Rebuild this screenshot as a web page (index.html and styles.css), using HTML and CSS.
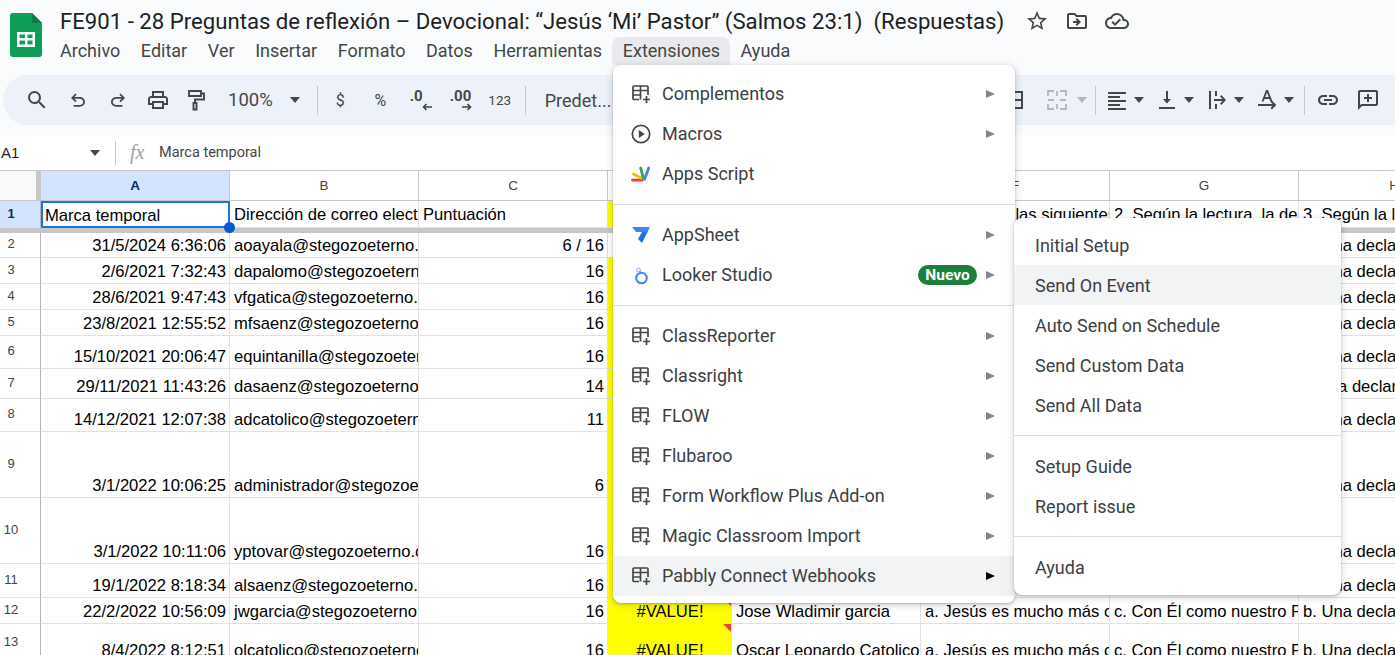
FILE: index.html
```html
<!DOCTYPE html>
<html lang="es">
<head>
  <meta charset="UTF-8" />
  <title>FE901 - 28 Preguntas de reflexión (Respuestas)</title>
  <link rel="stylesheet" href="styles.css">
</head>
<body>
  <svg class="defs" width="0" height="0">
    <symbol id="addon" viewBox="0 0 20 20">
      <path d="M8 15.500H3a1 1 0 0 1-1-1V3a1 1 0 0 1 1-1h13a1 1 0 0 1 1 1v8M2 6.500h15M9.500 2v13.500M2 11h7.500M15.500 12v7M12 15.500h7" fill="none" stroke="#444746" stroke-width="1.700"/>
    </symbol>
  </svg>

  <header class="top">
    <svg class="logo" viewBox="0 0 32 44">
      <path d="M3 0h19l10 10v31a3 3 0 0 1-3 3H3a3 3 0 0 1-3-3V3a3 3 0 0 1 3-3z" fill="#0f9d58"/>
      <path d="M22 0l10 10H22z" fill="#0b7a43"/>
      <path d="M7 19h18v15H7zm2.500 2.500v3.500h5.500v-3.500zm8 0v3.500h5v-3.500zm-8 6v4h5.500v-4zm8 0v4h5v-4z" fill="#fff" fill-rule="evenodd"/>
    </svg>
    <div class="top-main">
      <div class="title-row">
        <h1 class="doc-title">FE901 - 28 Preguntas de reflexión – Devocional: “Jesús ‘Mi’ Pastor” (Salmos 23:1)&nbsp; (Respuestas)</h1>
        <svg class="ico" viewBox="0 0 24 24"><path d="M22 9.240l-7.190-.62L12 2 9.190 8.630 2 9.240l5.460 4.730L5.820 21 12 17.270 18.180 21l-1.630-7.030L22 9.240zM12 15.400l-3.760 2.270 1-4.280-3.320-2.880 4.380-.38L12 6.100l1.710 4.040 4.380.38-3.320 2.880 1 4.280L12 15.400z"/></svg>
        <svg class="ico" viewBox="0 0 24 24"><path d="M20 6h-8l-2-2H4c-1.100 0-2 .9-2 2v12c0 1.100.9 2 2 2h16c1.100 0 2-.9 2-2V8c0-1.100-.9-2-2-2zm0 12H4V6h5.170l2 2H20v10z"/><path d="M12.160 12H8v2h4.160l-1.590 1.590L12 17l4-4-4-4-1.410 1.410z"/></svg>
        <svg class="ico" viewBox="0 0 24 24"><path d="M19.350 10.040A7.490 7.490 0 0 0 12 4C9.110 4 6.600 5.640 5.350 8.040A5.994 5.994 0 0 0 0 14c0 3.310 2.690 6 6 6h13c2.760 0 5-2.240 5-5 0-2.640-2.050-4.780-4.650-4.960zM19 18H6c-2.210 0-4-1.790-4-4 0-2.050 1.530-3.760 3.560-3.970l1.070-.11.5-.95A5.469 5.469 0 0 1 12 6c2.620 0 4.880 1.860 5.390 4.430l.3 1.500 1.530.11A2.980 2.980 0 0 1 22 15c0 1.650-1.350 3-3 3zm-9-3.820l-2.090-2.090L6.500 13.500 10 17l6.010-6.010-1.410-1.410z"/></svg>
      </div>
      <nav class="menubar">
        <span>Archivo</span><span>Editar</span><span>Ver</span><span>Insertar</span><span>Formato</span><span>Datos</span><span>Herramientas</span><span class="open">Extensiones</span><span>Ayuda</span>
      </nav>
    </div>
  </header>

  <div class="toolbar-wrap">
    <div class="toolbar">
      <svg class="tb w42" viewBox="0 0 24 24"><path d="M15.500 14h-.79l-.28-.27A6.470 6.470 0 0 0 16 9.500 6.500 6.500 0 1 0 9.500 16c1.610 0 3.090-.59 4.230-1.570l.27.28v.79l5 4.990L20.490 19l-4.990-5zm-6 0C7.010 14 5 11.990 5 9.500S7.010 5 9.500 5 14 7.010 14 9.500 11.990 14 9.500 14z"/></svg>
      <svg class="tb w40 small" viewBox="0 0 24 24"><path d="M7 19v-2h7.100c1.050 0 1.960-.33 2.730-1 .78-.67 1.170-1.500 1.170-2.500s-.39-1.830-1.170-2.500C16.060 10.330 15.150 10 14.100 10H7.800l2.600 2.600L9 14 4 9l5-5 1.400 1.400L7.800 8h6.300c1.620 0 3 .53 4.150 1.580C19.420 10.630 20 11.930 20 13.500s-.58 2.870-1.750 3.920C17.100 18.470 15.720 19 14.100 19H7z"/></svg>
      <svg class="tb w40 small flip" viewBox="0 0 24 24"><path d="M7 19v-2h7.100c1.050 0 1.960-.33 2.730-1 .78-.67 1.170-1.500 1.170-2.500s-.39-1.830-1.170-2.500C16.060 10.330 15.150 10 14.100 10H7.800l2.600 2.600L9 14 4 9l5-5 1.400 1.400L7.800 8h6.300c1.620 0 3 .53 4.150 1.580C19.420 10.630 20 11.930 20 13.500s-.58 2.870-1.750 3.920C17.100 18.470 15.720 19 14.100 19H7z"/></svg>
      <svg class="tb w40" viewBox="0 0 24 24"><path d="M19 8h-1V3H6v5H5c-1.660 0-3 1.340-3 3v6h4v4h12v-4h4v-6c0-1.660-1.340-3-3-3zM8 5h8v3H8V5zm8 14H8v-4h8v4zm4-4h-2v-2H6v2H4v-4c0-.55.45-1 1-1h14c.55 0 1 .45 1 1v4z"/></svg>
      <svg class="tb w36" viewBox="0 0 24 24"><path d="M5 3h12v5H5zM17 5.500h3v6h-9V15M9.500 15h3v6.500h-3z" fill="none" stroke="#444746" stroke-width="1.900"/></svg>
      <span class="tb-text zoom">100%</span>
      <i class="caret zoom-caret"></i>
      <i class="tb-sep"></i>
      <span class="tb-text money">$</span>
      <span class="tb-text pct">%</span>
      <span class="tb-text dec first">.0<svg viewBox="0 0 12 8"><path d="M11 4H3M5.500 1L2.500 4l3 3" fill="none" stroke="#444746" stroke-width="1.600"/></svg></span>
      <span class="tb-text dec">.00<svg viewBox="0 0 12 8"><path d="M1 4h8M6.500 1l3 3-3 3" fill="none" stroke="#444746" stroke-width="1.600"/></svg></span>
      <span class="tb-text num">123</span>
      <i class="tb-sep"></i>
      <span class="tb-text font">Predet...</span>

      <div class="tb-right">
        <svg class="tb w36 borders" viewBox="0 0 24 24"><path d="M3 4h18v16H3zM12 4v16M3 12h18" fill="none" stroke="#444746" stroke-width="2"/></svg>
        <svg class="tb w26 off" viewBox="0 0 24 24"><path d="M9 3H3v5M15 3h6v5M9 21H3v-5M15 21h6v-5M12 3v5M12 16v5M3 12h6M15 12h6" fill="none" stroke="#b4b6b9" stroke-width="1.800"/></svg>
        <i class="caret off-caret"></i>
        <i class="tb-sep"></i>
        <svg class="tb w26" viewBox="0 0 24 24"><path d="M3 4h18v2H3zM3 8h12v2H3zM3 12h18v2H3zM3 16h12v2H3zM3 20h18v2H3z"/></svg>
        <i class="caret"></i>
        <svg class="tb w26" viewBox="0 0 24 24"><path d="M4 19h16v2H4zM16 11h-3V3h-2v8H8l4 4.500z"/></svg>
        <i class="caret"></i>
        <svg class="tb w26" viewBox="0 0 24 24"><path d="M4 3h2v18H4zM10 3h2v5h-2zM10 16h2v5h-2zM9 11h8.500l-2.500-2.500L16.400 7 21 12l-4.600 5-1.400-1.500 2.500-2.500H9z"/></svg>
        <i class="caret"></i>
        <svg class="tb w26" viewBox="0 0 24 24"><path d="M11 2h2l4.500 11.500h-2L14.400 11H9.600l-1 2.500h-2zM10.300 9h3.400L12 4.500zM3 16h14.500l-2-2 1.400-1.400L21.300 17l-4.400 4.400-1.400-1.400 2-2H3z"/></svg>
        <i class="caret"></i>
        <i class="tb-sep"></i>
        <svg class="tb w44" viewBox="0 0 24 24"><path d="M17 7h-4v2h4c1.650 0 3 1.350 3 3s-1.350 3-3 3h-4v2h4c2.760 0 5-2.240 5-5s-2.240-5-5-5zm-6 8H7c-1.650 0-3-1.350-3-3s1.350-3 3-3h4V7H7c-2.760 0-5 2.240-5 5s2.240 5 5 5h4v-2zm-3-4h8v2H8z"/></svg>
        <svg class="tb w36" viewBox="0 0 24 24"><path d="M20 2H4c-1.100 0-2 .9-2 2v18l4-4h14c1.100 0 2-.9 2-2V4c0-1.100-.9-2-2-2zm0 14H5.170L4 17.170V4h16v12z"/><path d="M11 6h2v3h3v2h-3v3h-2v-3H8V9h3z"/></svg>
      </div>
    </div>
  </div>

  <div class="formula-bar">
    <span class="name-box">A1</span>
    <i class="caret"></i>
    <i class="fb-sep"></i>
    <em class="fx">fx</em>
    <span class="fb-text">Marca temporal</span>
  </div>

  <div class="sheet-wrap">
  <table class="sheet">
    <colgroup>
      <col class="c-row"><col class="c-a"><col class="c-b"><col class="c-c"><col class="c-d"><col class="c-e"><col class="c-f"><col class="c-g"><col class="c-h">
    </colgroup>
    <tr class="col-heads">
      <th class="corner"></th><th class="sel-head">A</th><th>B</th><th>C</th><th>D</th><th>E</th><th>F</th><th>G</th><th>H</th>
    </tr>
    <tr class="h27 first-row">
      <th class="rn sel-head">1</th>
      <td class="l a1">Marca temporal<i class="handle"></i></td>
      <td class="l">Dirección de correo electrónico</td>
      <td class="l">Puntuación</td>
      <td class="y"></td>
      <td class="l">Nombre y apellido</td>
      <td class="l">1. ¿Cuál de las siguientes afirmaciones</td>
      <td class="l">2. Según la lectura, la descripción</td>
      <td class="l">3. Según la lectura</td>
    </tr>
    <tr class="freeze"><td colspan="9"></td></tr>
    <tr class="h25">
      <th class="rn">2</th><td class="r">31/5/2024 6:36:06</td><td class="l">aoayala@stegozoeterno.com</td><td class="r">6 / 16</td><td></td><td></td><td></td><td></td><td class="l">b. Una declaración</td>
    </tr>
    <tr class="h26">
      <th class="rn">3</th><td class="r">2/6/2021 7:32:43</td><td class="l">dapalomo@stegozoeterno.com</td><td class="r">16</td><td class="y"></td><td></td><td></td><td></td><td class="l">b. Una declaración</td>
    </tr>
    <tr class="h26">
      <th class="rn">4</th><td class="r">28/6/2021 9:47:43</td><td class="l">vfgatica@stegozoeterno.com</td><td class="r">16</td><td class="y"></td><td></td><td></td><td></td><td class="l">b. Una declaración</td>
    </tr>
    <tr class="h26">
      <th class="rn">5</th><td class="r">23/8/2021 12:55:52</td><td class="l">mfsaenz@stegozoeterno.com</td><td class="r">16</td><td class="y"></td><td></td><td></td><td></td><td class="l">b. Una declaración</td>
    </tr>
    <tr class="h33">
      <th class="rn">6</th><td class="r">15/10/2021 20:06:47</td><td class="l">equintanilla@stegozoeterno.com</td><td class="r">16</td><td class="y"></td><td></td><td></td><td></td><td class="l">b. Una declaración</td>
    </tr>
    <tr class="h30">
      <th class="rn">7</th><td class="r">29/11/2021 11:43:26</td><td class="l">dasaenz@stegozoeterno.com</td><td class="r">14</td><td class="y"></td><td></td><td></td><td></td><td class="l">f. Una declaración</td>
    </tr>
    <tr class="h33">
      <th class="rn">8</th><td class="r">14/12/2021 12:07:38</td><td class="l">adcatolico@stegozoeterno.com</td><td class="r">11</td><td class="y"></td><td></td><td></td><td></td><td class="l">b. Una declaración</td>
    </tr>
    <tr class="h66">
      <th class="rn">9</th><td class="r">3/1/2022 10:06:25</td><td class="l">administrador@stegozoeterno.com</td><td class="r">6</td><td class="y"></td><td></td><td></td><td></td><td class="l">b. Una declaración</td>
    </tr>
    <tr class="h66">
      <th class="rn">10</th><td class="r">3/1/2022 10:11:06</td><td class="l">yptovar@stegozoeterno.com</td><td class="r">16</td><td class="y"></td><td></td><td></td><td></td><td class="l">b. Una declaración</td>
    </tr>
    <tr class="h34">
      <th class="rn">11</th><td class="r">19/1/2022 8:18:34</td><td class="l">alsaenz@stegozoeterno.com</td><td class="r">16</td><td class="y"></td><td></td><td></td><td></td><td class="l">b. Una declaración</td>
    </tr>
    <tr class="h26">
      <th class="rn">12</th><td class="r">22/2/2022 10:56:09</td><td class="l">jwgarcia@stegozoeterno.com</td><td class="r">16</td><td class="y c note">#VALUE!</td><td class="l">Jose Wladimir garcia</td><td class="l">a. Jesús es mucho más cercano</td><td class="l">c. Con Él como nuestro Pastor</td><td class="l">b. Una declaración</td>
    </tr>
    <tr class="h39">
      <th class="rn">13</th><td class="r">8/4/2022 8:12:51</td><td class="l">olcatolico@stegozoeterno.com</td><td class="r">16</td><td class="y c note">#VALUE!</td><td class="l">Oscar Leonardo Catolico</td><td class="l">a. Jesús es mucho más cercano</td><td class="l">c. Con Él como nuestro Pastor</td><td class="l">b. Una declaración</td>
    </tr>
  </table>
  </div>

  <div class="menu main-menu">
    <div class="item"><svg class="mi"><use href="#addon"/></svg>Complementos<i class="arrow"></i></div>
    <div class="item">
      <svg class="mi" viewBox="0 0 20 20"><circle cx="10" cy="10" r="8.700" fill="none" stroke="#444746" stroke-width="1.700"/><path d="M7.800 6l6 4-6 4z" fill="#444746"/></svg>
      Macros<i class="arrow"></i>
    </div>
    <div class="item">
      <svg class="mi" viewBox="0 0 20 20" fill="none" stroke-linecap="round">
        <path d="M1.500 16.200h9.500" stroke="#ea4335" stroke-width="2.800"/>
        <path d="M2.500 10l8 4.300" stroke="#fbbc04" stroke-width="2.800"/>
        <path d="M9.700 4l2.600 10.300" stroke="#34a853" stroke-width="2.800"/>
        <path d="M17.700 4l-4.200 11.300" stroke="#4285f4" stroke-width="2.800"/>
      </svg>
      Apps Script
    </div>
    <hr>
    <div class="item">
      <svg class="mi" viewBox="0 0 20 20"><path d="M1 2h18l-4.500 5H5z" fill="#4285f4"/><path d="M14.500 7L19 2l-8 16-4-4 4-7z" fill="#1a73e8"/></svg>
      AppSheet<i class="arrow"></i>
    </div>
    <div class="item">
      <svg class="mi" viewBox="0 0 20 20"><circle cx="10.500" cy="13" r="5.300" fill="none" stroke="#4285f4" stroke-width="2"/><circle cx="7.500" cy="5" r="1.800" fill="none" stroke="#aecbfa" stroke-width="1.400"/><path d="M8.500 6.500l1.500 1.500" stroke="#4285f4" stroke-width="1.600"/></svg>
      Looker Studio<span class="badge">Nuevo</span><i class="arrow near"></i>
    </div>
    <hr>
    <div class="item"><svg class="mi"><use href="#addon"/></svg>ClassReporter<i class="arrow"></i></div>
    <div class="item"><svg class="mi"><use href="#addon"/></svg>Classright<i class="arrow"></i></div>
    <div class="item"><svg class="mi"><use href="#addon"/></svg>FLOW<i class="arrow"></i></div>
    <div class="item"><svg class="mi"><use href="#addon"/></svg>Flubaroo<i class="arrow"></i></div>
    <div class="item"><svg class="mi"><use href="#addon"/></svg>Form Workflow Plus Add-on<i class="arrow"></i></div>
    <div class="item"><svg class="mi"><use href="#addon"/></svg>Magic Classroom Import<i class="arrow"></i></div>
    <div class="item hover"><svg class="mi"><use href="#addon"/></svg>Pabbly Connect Webhooks<i class="arrow"></i></div>
  </div>

  <div class="menu sub-menu">
    <div class="item">Initial Setup</div>
    <div class="item hover">Send On Event</div>
    <div class="item">Auto Send on Schedule</div>
    <div class="item">Send Custom Data</div>
    <div class="item">Send All Data</div>
    <hr>
    <div class="item">Setup Guide</div>
    <div class="item">Report issue</div>
    <hr>
    <div class="item">Ayuda</div>
  </div>
</body>
</html>
```

FILE: styles.css
```css
* { box-sizing: border-box; }
html, body {
  height: 100%;
}
body {
  margin: 0;
  overflow: hidden;
  background: #fff;
  font-family: Roboto, sans-serif;
  color: #1f1f1f;
  position: relative;
}
.defs {
  position: absolute;
}

/* header */
.top {
  display: flex;
  height: 75px;
  background: #f9fbfd;
}
.logo {
  width: 32px;
  height: 44px;
  margin: 13px 18px 0 10px;
  flex: none;
}
.top-main {
  flex: 1;
  min-width: 0;
}
.title-row {
  display: flex;
  align-items: center;
  height: 37px;
  padding-top: 4px;
}
.doc-title {
  margin: 0 21px 0 0;
  font-size: 22.160px;
  font-weight: 400;
  white-space: nowrap;
  color: #1f1f1f;
}
.ico {
  width: 24px;
  height: 24px;
  margin-right: 16px;
  fill: #444746;
}
.menubar {
  display: flex;
  height: 28px;
  align-items: center;
  font-size: 18px;
  color: #444746;
  margin-left: -10.300px;
}
.menubar span {
  padding: 0 10.300px;
  line-height: 28px;
}
.menubar .open {
  background: #e8eaed;
  border-radius: 8px 8px 0 0;
}

/* toolbar */
.toolbar-wrap {
  height: 60px;
  background: #f9fbfd;
  padding: 0 0 9px 3px;
}
.toolbar {
  display: flex;
  align-items: center;
  height: 50px;
  padding-left: 13px;
  background: #edf2fa;
  border-radius: 25px 0 0 25px;
  color: #444746;
}
.tb {
  height: 24px;
  fill: #444746;
  flex: none;
}
.tb.small { height: 21px; }
.w26 { width: 26px; }
.w36 { width: 36px; }
.w40 { width: 40px; }
.w42 { width: 42px; }
.w44 { width: 44px; }
.flip { transform: scaleX(-1); }
.tb-text {
  font-size: 16px;
  flex: none;
}
.zoom {
  font-size: 18.500px;
  margin-left: 14px;
}
.zoom-caret {
  margin: 0 17px 0 17px;
}
.money {
  width: 25px;
  margin-left: 18px;
  text-align: left;
}
.pct {
  width: 37px;
  text-align: center;
  margin-left: 1px;
}
.dec {
  display: flex;
  flex-direction: column;
  align-items: flex-start;
  width: 40px;
  padding-left: 10px;
  font-size: 15px;
  font-weight: 700;
  line-height: 13px;
}
.dec.first {
  margin-left: 1px;
}
.dec svg {
  width: 12px;
  height: 8px;
  margin-left: 11px;
}
.num {
  width: 40px;
  margin-right: 5px;
  text-align: center;
  font-size: 13.500px;
}
.font {
  font-size: 18px;
  margin-left: 19px;
}
.tb-sep {
  width: 1px;
  height: 29px;
  background: #c7c7c7;
  flex: none;
}
.tb-right {
  display: flex;
  align-items: center;
  margin-left: auto;
  padding-right: 9px;
}
.caret {
  width: 0;
  height: 0;
  border: 5px solid transparent;
  border-top: 6px solid #444746;
  border-bottom: 0;
  flex: none;
}
.tb-right .caret {
  margin: 0 10px 0 4px;
}
.tb-right .tb-sep {
  margin-right: 1px;
}
.tb-right .off-caret {
  margin: 0 8px 0 7px;
  border-top-color: #b4b6b9;
}
.tb-right .off-caret + .tb-sep {
  margin-right: 8px;
}
.borders {
  margin-right: 13px;
}

/* formula bar */
.formula-bar {
  display: flex;
  align-items: center;
  height: 36px;
  background: #fff;
  border-bottom: 1px solid #c7c7c7;
  font-size: 14.500px;
  color: #444746;
}
.name-box {
  width: 90px;
  padding-left: 1px;
  font-family: "Liberation Sans", sans-serif;
  font-size: 15px;
  color: #1f1f1f;
}
.fb-sep {
  width: 1px;
  height: 24px;
  background: #c7c7c7;
  margin: 0 14px 0 15px;
}
.fx {
  width: 29px;
  font-family: "Liberation Serif", serif;
  font-size: 20px;
  color: #9aa0a6;
}

/* sheet */
.sheet-wrap {
  overflow: hidden;
}
.sheet {
  table-layout: fixed;
  border-collapse: separate;
  border-spacing: 0;
  width: 1490px;
  font-family: "Liberation Sans", sans-serif;
  font-size: 16.600px;
  color: #000;
}
.c-row { width: 41px; }
.c-a { width: 189px; }
.c-b { width: 189px; }
.c-c { width: 189px; }
.c-d { width: 124px; }
.c-e { width: 189px; }
.c-f { width: 189px; }
.c-g { width: 189px; }
.c-h { width: 191px; }
th, td {
  padding: 0 3px 2px 4px;
  border-right: 1px solid #e1e1e1;
  border-bottom: 1px solid #e1e1e1;
  overflow: hidden;
  white-space: nowrap;
  vertical-align: bottom;
  line-height: 18px;
}
.first-row td {
  padding-bottom: 3px;
}
.col-heads {
  height: 30px;
}
.col-heads th {
  padding: 0;
  vertical-align: middle;
  text-align: center;
  font-weight: 400;
  font-size: 13.500px;
  color: #444;
  border-right-color: #c7c7c7;
  border-bottom-color: #c7c7c7;
}
.col-heads .corner {
  background: #f8f9fa;
  border-right: 5px solid #c7c7c7;
}
.col-heads .sel-head {
  background: #d3e3fd;
  font-weight: 700;
  color: #0b2a5e;
}
.rn {
  padding: 0 18px 2px 0;
  vertical-align: middle;
  text-align: center;
  font-weight: 400;
  font-size: 13px;
  color: #444;
  border-right-color: #b5b5b5;
  border-bottom-color: #e1e1e1;
}
.rn.sel-head {
  padding-bottom: 0;
  background: #d3e3fd;
  font-weight: 700;
  color: #0b2a5e;
}
.h25 { height: 25px; }
.h26 { height: 26px; }
.h27 { height: 27px; }
.h30 { height: 30px; }
.h33 { height: 33px; }
.h34 { height: 34px; }
.h39 { height: 39px; }
.h66 { height: 66px; }
.freeze {
  height: 5px;
}
.freeze td {
  padding: 0;
  border: 0;
  background: #c7c7c7;
  line-height: 0;
  font-size: 0;
}
.l { text-align: left; }
.r { text-align: right; }
.c { text-align: center; }
.y { background: #ff0; }
.note {
  position: relative;
}
.note::after {
  content: "";
  position: absolute;
  top: 0;
  right: 0;
  border-style: solid;
  border-width: 0 8px 8px 0;
  border-color: transparent #ea4335 transparent transparent;
}
.a1 {
  position: relative;
  overflow: visible;
  border: 0;
  box-shadow: inset 0 0 0 2px #1a73e8;
}
.handle {
  position: absolute;
  right: -5px;
  bottom: -5px;
  width: 11px;
  height: 11px;
  border-radius: 50%;
  background: #0b57d0;
  z-index: 2;
}

/* menus */
.menu {
  position: absolute;
  z-index: 5;
  background: #fff;
  border-radius: 8px;
  box-shadow: 0 1px 2px rgba(60,64,67,.3), 0 2px 6px 2px rgba(60,64,67,.15);
  font-size: 18px;
  color: #3c4043;
}
.main-menu {
  left: 613px;
  top: 65px;
  width: 402px;
  padding: 9px 0 7px;
}
.sub-menu {
  left: 1014px;
  top: 218px;
  width: 327px;
  padding: 7px 0 8px;
  z-index: 6;
}
.item {
  display: flex;
  align-items: center;
  height: 40px;
  padding: 0 20px 2px 18px;
}
.item .arrow,
.item .mi,
.item .badge {
  position: relative;
  top: 1px;
}
.sub-menu .item {
  padding: 0 0 0 21px;
}
.item.hover {
  background: #f1f3f4;
}
.mi {
  width: 20px;
  height: 20px;
  margin-right: 11px;
  flex: none;
}
.arrow {
  width: 0;
  height: 0;
  margin-left: auto;
  border-style: solid;
  border-width: 4px 0 4px 9px;
  border-color: transparent transparent transparent #80868b;
}
.arrow.near {
  margin-left: 9px;
}
.hover .arrow {
  border-left-color: #000;
}
.badge {
  margin-left: auto;
  width: 59px;
  height: 20px;
  border-radius: 10px;
  background: #188038;
  color: #fff;
  font-size: 15.500px;
  font-weight: 700;
  line-height: 20px;
  text-align: center;
}
hr {
  margin: 10px 0;
  border: 0;
  border-top: 1px solid #dadce0;
}
```
